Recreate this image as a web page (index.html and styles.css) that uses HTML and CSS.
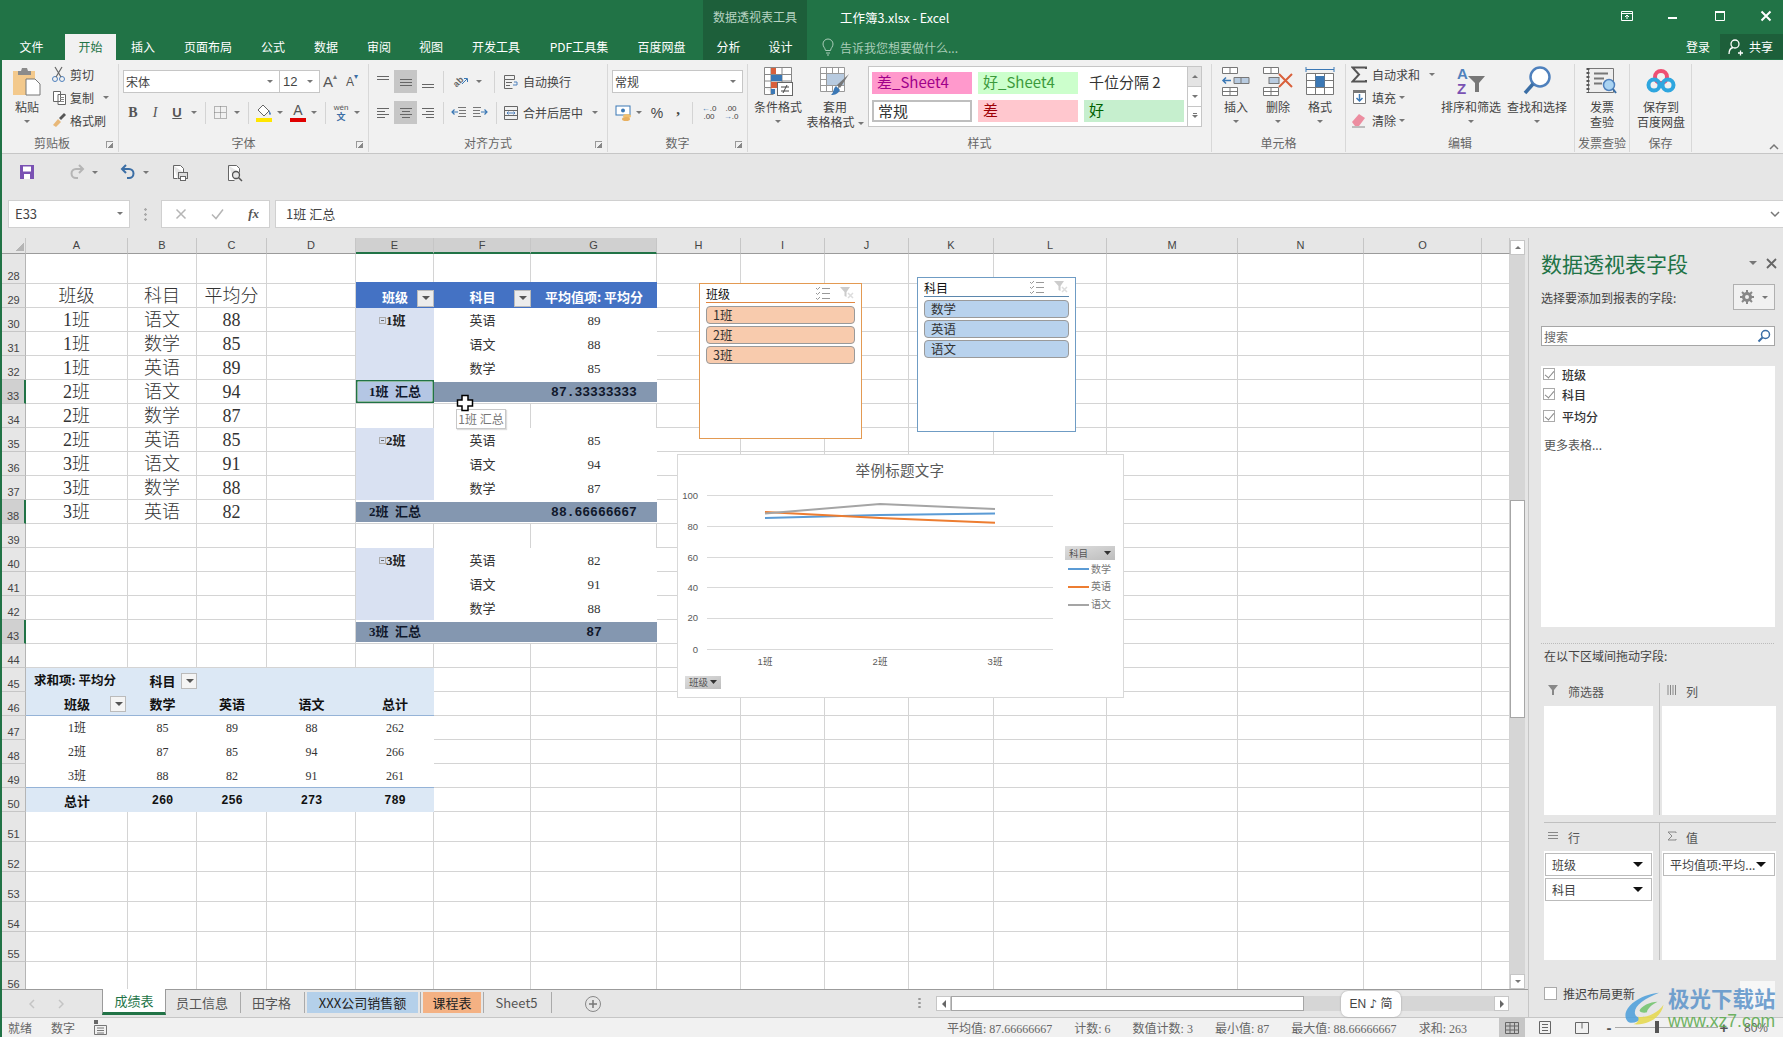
FILE: index.html
```html
<!DOCTYPE html>
<html lang="zh-CN">
<head>
  <meta charset="UTF-8" />
  <title>工作簿3.xlsx - Excel</title>
  <link rel="stylesheet" href="styles.css">
</head>
<body>
<div class="app">

  <!-- title bar -->
  <div class="titlebar">
    <div class="tool-title">数据透视表工具</div>
    <div class="doc-title">工作簿3.xlsx - Excel</div>
    <div class="win-btns">
      <svg width="14" height="14" viewBox="0 0 14 14"><path d="M1.5 2.5h11v9h-11zM1.5 4.5h11M7 10V6M5 8l2-2 2 2" fill="none" stroke="#fff"/></svg>
      <svg width="14" height="14" viewBox="0 0 14 14"><path d="M2 9h9" stroke="#fff" stroke-width="2"/></svg>
      <svg width="14" height="14" viewBox="0 0 14 14"><path d="M2.5 2.5h9v9h-9z" fill="none" stroke="#fff"/><path d="M2 3h10" stroke="#fff" stroke-width="2"/></svg>
      <svg width="14" height="14" viewBox="0 0 14 14"><path d="M2.5 2.5l9 9M11.5 2.5l-9 9" stroke="#fff" stroke-width="2"/></svg>
    </div>
  </div>

  <!-- ribbon tabs -->
  <div class="tabs">
    <div class="tab t-file">文件</div>
    <div class="tab t-home active">开始</div>
    <div class="tab t-ins">插入</div>
    <div class="tab t-page">页面布局</div>
    <div class="tab t-form">公式</div>
    <div class="tab t-data">数据</div>
    <div class="tab t-rev">审阅</div>
    <div class="tab t-view">视图</div>
    <div class="tab t-dev">开发工具</div>
    <div class="tab t-pdf">PDF工具集</div>
    <div class="tab t-pan">百度网盘</div>
    <div class="tab t-ana ctx">分析</div>
    <div class="tab t-des ctx">设计</div>
    <div class="tell">
      <svg width="12" height="18" viewBox="0 0 12 18"><path d="M3.5 12.5C3 9.5 1 9 1 6a5 5 0 0 1 10 0c0 3-2 3.500-2.500 6.500zM4 15h4M5 17h2" fill="none" stroke="#a9cdb8"/></svg>
      告诉我您想要做什么...
    </div>
    <div class="login">登录</div>
    <div class="share">
      <svg width="16" height="18" viewBox="0 0 16 18"><circle cx="7" cy="6" r="4" fill="none" stroke="#fff" stroke-width="1.300"/><path d="M1 16c0-4 2-6 4-6.500M10 15h5M12.500 12.500v5" fill="none" stroke="#fff" stroke-width="1.300"/></svg>
      共享
    </div>
  </div>

  <!-- ribbon -->
  <div class="ribbon">

    <div class="group g-clip">
      <div class="g-body row">
        <div class="big w48 paste">
          <svg class="big-ic" width="30" height="30" viewBox="0 0 30 30"><rect x="1" y="5" width="22" height="24" fill="#f3c98c"/><path d="M6 5h3l1-3h5l1 3h3v4H6z" fill="#8b8b8b"/><path d="M14 13h9l5 5v11H14z" fill="#fff" stroke="#777"/></svg>
          <span>粘贴</span><i class="caret"></i>
        </div>
        <div class="stack">
          <div class="sm"><span class="ic w18"><svg width="16" height="16" viewBox="0 0 16 16"><circle cx="4" cy="13" r="2.500" fill="none" stroke="#4f81bd"/><circle cx="11" cy="13" r="2.500" fill="none" stroke="#4f81bd"/><path d="M5 11L11 1M10 11L4 1" stroke="#666" stroke-width="1.200"/></svg></span><b>剪切</b></div>
          <div class="sm"><span class="ic w18"><svg width="15" height="15" viewBox="0 0 15 15"><path d="M1.500 1.500h7v10h-7zM6 4.500h7.500v10H6z" fill="#fff" stroke="#666"/><path d="M8 7.500h4M8 9.500h4M8 11.500h4" stroke="#888"/></svg></span><b>复制</b><span class="ic w24 sm-c"><i class="caret"></i></span></div>
          <div class="sm"><span class="ic w18"><svg width="16" height="16" viewBox="0 0 16 16"><path d="M2 13l5-6 3 3-5 5z" fill="#e8b878"/><path d="M8 6l5-5 2 2-5 5z" fill="#555"/></svg></span><b>格式刷</b></div>
        </div>
      </div>
      <div class="g-label lab-clip">剪贴板<i class="launch"></i></div>
    </div>

    <div class="group g-font">
      <div class="g-body">
        <div class="rrow">
          <div class="select s-font"><span>宋体</span><i class="caret"></i></div>
          <div class="select s-size"><span>12</span><i class="caret"></i></div>
          <span class="ic w20 letter">A<sup>▴</sup></span>
          <span class="ic w24 letter small">A<sup class="blue">▾</sup></span>
        </div>
        <div class="rrow">
          <span class="ic w22 fb">B</span>
          <span class="ic w22 fi">I</span>
          <span class="ic w22 fu">U</span>
          <span class="ic w12"><i class="caret"></i></span>
          <span class="ic w10"><i class="sep"></i></span>
          <span class="ic w21"><svg width="15" height="15" viewBox="0 0 15 15"><path d="M1.500 1.500h12v12h-12zM7.500 1.500v12M1.500 7.500h12" fill="none" stroke="#777" stroke-dasharray="1 1"/></svg></span>
          <span class="ic w12"><i class="caret"></i></span>
          <span class="ic w10"><i class="sep"></i></span>
          <span class="ic w22"><svg width="18" height="18" viewBox="0 0 18 18"><path d="M8 1l6 6-5 5-6-6z" fill="#fff" stroke="#666"/><path d="M14 6c1 2 2 3 2 4s-2 1-2 0z" fill="#4f81bd"/><rect x="1" y="14" width="16" height="4" fill="#ffe600"/></svg></span>
          <span class="ic w10"><i class="caret"></i></span>
          <span class="ic w26 fcolor">A</span>
          <span class="ic w6"><i class="caret"></i></span>
          <span class="ic w16"><i class="sep"></i></span>
          <span class="ic w16 wen"><small>wén</small><em>文</em></span>
          <span class="ic w16"><i class="caret"></i></span>
        </div>
      </div>
      <div class="g-label lab-font">字体<i class="launch"></i></div>
    </div>

    <div class="group g-align">
      <div class="g-body">
        <div class="rrow">
          <span class="ic w22"><svg width="16" height="16" viewBox="0 0 16 16"><path d="M2 2.500h12M2 5.500h12" stroke="#666"/></svg></span>
          <span class="ic w23 on"><svg width="16" height="16" viewBox="0 0 16 16"><path d="M2 5.500h12M2 8.500h12M2 11.500h12" stroke="#666"/></svg></span>
          <span class="ic w22"><svg width="16" height="16" viewBox="0 0 16 16"><path d="M2 10.500h12M2 13.500h12" stroke="#666"/></svg></span>
          <span class="ic w8"><i class="sep"></i></span>
          <span class="ic w26"><svg width="18" height="18" viewBox="0 0 18 18"><text x="2" y="12" transform="rotate(-45 7 9)" class="orient">ab</text><path d="M11 11l5-5M13 5.500h3.500V9" fill="none" stroke="#3b78b5"/></svg></span>
          <span class="ic w12"><i class="caret"></i></span>
          <span class="ic w18"><i class="sep"></i></span>
          <span class="ic w16"><svg width="16" height="16" viewBox="0 0 16 16"><path d="M1.500 1.500h10v4h-10zM1.500 5.500v9h8M3 8.500h6M3 11.500h4" fill="none" stroke="#666"/><path d="M11 8h3v3h-4" fill="none" stroke="#4f81bd"/></svg></span>
          <b class="t">自动换行</b>
        </div>
        <div class="rrow">
          <span class="ic w22"><svg width="16" height="16" viewBox="0 0 16 16"><path d="M2 3.500h12M2 6.500h8M2 9.500h12M2 12.500h8" stroke="#666"/></svg></span>
          <span class="ic w23 on"><svg width="16" height="16" viewBox="0 0 16 16"><path d="M2 3.500h12M4 6.500h8M2 9.500h12M4 12.500h8" stroke="#666"/></svg></span>
          <span class="ic w22"><svg width="16" height="16" viewBox="0 0 16 16"><path d="M2 3.500h12M6 6.500h8M2 9.500h12M6 12.500h8" stroke="#666"/></svg></span>
          <span class="ic w8"><i class="sep"></i></span>
          <span class="ic w24"><svg width="16" height="14" viewBox="0 0 16 14"><path d="M7 1.500h8M8 4.500h7M8 7.500h7M7 10.500h8" stroke="#777"/><path d="M1 6h6M3.500 3.500L1 6l2.500 2.500" fill="none" stroke="#3b78b5" stroke-width="1.200"/></svg></span>
          <span class="ic w18"><svg width="16" height="14" viewBox="0 0 16 14"><path d="M1 1.500h8M1 4.500h7M1 7.500h7M1 10.500h8" stroke="#777"/><path d="M9 6h6M12.500 3.500L15 6l-2.500 2.500" fill="none" stroke="#3b78b5" stroke-width="1.200"/></svg></span>
          <span class="ic w14"><i class="sep"></i></span>
          <span class="ic w16"><svg width="16" height="16" viewBox="0 0 16 16"><path d="M1.500 1.500h13v13h-13zM1.500 5.500h13M1.500 10.500h13" fill="none" stroke="#666"/><path d="M4 8h8M5.500 6.500L4 8l1.500 1.500M10.500 6.500L12 8l-1.500 1.500" fill="none" stroke="#4f81bd"/></svg></span>
          <b class="t">合并后居中</b>
          <span class="ic w24"><i class="caret"></i></span>
        </div>
      </div>
      <div class="g-label lab-align">对齐方式<i class="launch"></i></div>
    </div>

    <div class="group g-num">
      <div class="g-body">
        <div class="rrow">
          <div class="select s-num"><span>常规</span><i class="caret"></i></div>
        </div>
        <div class="rrow">
          <span class="ic w24"><svg width="18" height="18" viewBox="0 0 18 18"><rect x="1" y="2" width="14" height="9" fill="#fff" stroke="#3b78b5"/><circle cx="8" cy="6.500" r="2" fill="#3b78b5"/><ellipse cx="12" cy="12" rx="4" ry="2" fill="#f0c070"/><ellipse cx="11" cy="15" rx="4" ry="2" fill="#e8b060"/></svg></span>
          <span class="ic w6"><i class="caret"></i></span>
          <span class="ic w30 pct">%</span>
          <span class="ic w12 comma">,</span>
          <span class="ic w17"><i class="sep"></i></span>
          <span class="ic w16 dec"><small><u>←</u>.0</small><small>.00</small></span>
          <span class="ic w28 dec"><small>.00</small><small><u>→</u>.0</small></span>
        </div>
      </div>
      <div class="g-label lab-num">数字<i class="launch"></i></div>
    </div>

    <div class="group g-style">
      <div class="g-body row">
        <div class="big w60">
          <svg class="big-ic" width="30" height="30" viewBox="0 0 30 30"><path d="M1.500 1.500h27v20h-27zM1.500 8.500h27M1.500 15h27M1.500 21.500v7h9M8 1.500v27M19 1.500v20" fill="#fff" stroke="#888"/><rect x="8" y="2" width="5" height="6" fill="#d9603b"/><rect x="8" y="9" width="11" height="6" fill="#3b78b5"/><rect x="8" y="16" width="7" height="6" fill="#d9603b"/><rect x="8" y="23" width="4" height="5" fill="#3b78b5"/><rect x="14.500" y="16.500" width="15" height="13" fill="#fff" stroke="#666"/><path d="M18 21h8M18 25h8M24 19l-4 8" stroke="#444"/></svg>
          <span>条件格式</span><i class="caret"></i>
        </div>
        <div class="big w54">
          <svg class="big-ic" width="32" height="30" viewBox="0 0 32 30"><path d="M1.500 1.500h24v24h-24zM1.500 7.500h24M1.500 13.500h24M1.500 19.500h24M7.500 1.500v24M13.500 1.500v24M19.500 1.500v24" fill="#fff" stroke="#999"/><rect x="8" y="8" width="17" height="11" fill="#b8cbe0"/><path d="M30 8L18 19l3 3z" fill="#777"/><path d="M17 20l4 4c-2 4-5 5-9 5 3-2 2-7 5-9z" fill="#3b78b5"/></svg>
          <span>套用</span><span>表格格式<i class="caret inline"></i></span>
        </div>
        <div class="gallery">
          <div class="cells">
            <div class="st st-bad4">差_Sheet4</div>
            <div class="st st-good4">好_Sheet4</div>
            <div class="st">千位分隔 2</div>
            <div class="st st-normal">常规</div>
            <div class="st st-bad">差</div>
            <div class="st st-good">好</div>
          </div>
          <div class="g-scroll">
            <span class="dis"><i class="caret up"></i></span>
            <span><i class="caret"></i></span>
            <span><i class="caret bar"></i></span>
          </div>
        </div>
      </div>
      <div class="g-label lab-style">样式</div>
    </div>

    <div class="group g-cells">
      <div class="g-body row">
        <div class="big w48">
          <svg class="big-ic" width="30" height="30" viewBox="0 0 30 30"><path d="M1.500 1.500h15v6h-15zM9 1.500v6M1.500 21.500h15v8h-15zM1.500 25.500h15M9 21.500v8" fill="#fff" stroke="#777"/><path d="M13 11.500h15v6H13zM20 11.500v6" fill="#b8cbe0" stroke="#777"/><path d="M2 14.500h8M5 11.500l-3 3 3 3" fill="none" stroke="#3b78b5" stroke-width="1.500"/></svg>
          <span>插入</span><i class="caret"></i>
        </div>
        <div class="big w36">
          <svg class="big-ic" width="32" height="30" viewBox="0 0 32 30"><path d="M1.500 1.500h15v6h-15zM9 1.500v6M1.500 21.500h15v8h-15zM1.500 25.500h15M9 21.500v8" fill="#fff" stroke="#777"/><rect x="7" y="11.500" width="10" height="6" fill="#b8cbe0" stroke="#777"/><path d="M17 8l13 13M30 8L17 21" stroke="#d9603b" stroke-width="2"/></svg>
          <span>删除</span><i class="caret"></i>
        </div>
        <div class="big w48">
          <svg class="big-ic" width="30" height="30" viewBox="0 0 30 30"><path d="M1 3.500h28M1 1v5M29 1v5" stroke="#3b78b5" fill="none"/><path d="M1.500 7.500h27v21h-27zM1.500 14.500h27M1.500 21.500h27M10.500 7.500v21M19.500 7.500v21" fill="#fff" stroke="#777"/><rect x="10.500" y="10" width="9" height="11" fill="#3b78b5"/></svg>
          <span>格式</span><i class="caret"></i>
        </div>
      </div>
      <div class="g-label lab-cells">单元格</div>
    </div>

    <div class="group g-edit">
      <div class="g-body row">
        <div class="stack w95">
          <div class="sm"><span class="ic w26"><svg width="16" height="17" viewBox="0 0 16 17"><path d="M15 3V1.500H1.500L8 8.500l-6.500 7H15V14" fill="none" stroke="#555" stroke-width="2"/></svg></span><b>自动求和</b><span class="ic w24 sm-c"><i class="caret"></i></span></div>
          <div class="sm"><span class="ic w26"><svg width="15" height="16" viewBox="0 0 15 16"><path d="M1.500 1.500h12v13h-12z" fill="#fff" stroke="#777"/><rect x="1" y="1" width="13" height="3" fill="#777"/><path d="M7.500 5v7M4.500 9l3 3 3-3" fill="none" stroke="#3b78b5" stroke-width="1.500"/></svg></span><b>填充</b><span class="ic w12 sm-c"><i class="caret"></i></span></div>
          <div class="sm"><span class="ic w26"><svg width="16" height="16" viewBox="0 0 16 16"><path d="M1 10l7-8 6 4-6 8H4z" fill="#ec8da0"/><path d="M1 15h13" stroke="#888"/></svg></span><b>清除</b><span class="ic w12 sm-c"><i class="caret"></i></span></div>
        </div>
        <div class="big w60">
          <svg class="big-ic" width="32" height="30" viewBox="0 0 32 30"><text x="2" y="13" class="sort-a">A</text><text x="2" y="28" class="sort-z">Z</text><path d="M13 10h17l-6 7v9h-4v-9z" fill="#777"/></svg>
          <span>排序和筛选</span><i class="caret"></i>
        </div>
        <div class="big w60 ml6">
          <svg class="big-ic" width="30" height="30" viewBox="0 0 30 30"><circle cx="18" cy="11" r="9.500" fill="#fff" stroke="#4f81bd" stroke-width="2.500"/><path d="M11 18L3 27" stroke="#3b6ea5" stroke-width="3.500"/></svg>
          <span>查找和选择</span><i class="caret"></i>
        </div>
      </div>
      <div class="g-label lab-edit">编辑</div>
    </div>

    <div class="group g-inv">
      <div class="g-body row">
        <div class="big w54">
          <svg class="big-ic" width="32" height="30" viewBox="0 0 32 30"><path d="M2.500 2.500h25v24h-25z" fill="#eee" stroke="#777"/><path d="M2 2v25" stroke="#555" stroke-width="3" stroke-dasharray="2 2"/><path d="M8 7.500h14M8 12.500h10M8 17.500h8" stroke="#777" stroke-width="2"/><circle cx="23" cy="19" r="5.500" fill="#a9d3f2" stroke="#4f81bd" stroke-width="1.500"/><path d="M27 23l3 4" stroke="#3b6ea5" stroke-width="2"/></svg>
          <span>发票</span><span>查验</span>
        </div>
      </div>
      <div class="g-label">发票查验</div>
    </div>

    <div class="group g-save">
      <div class="g-body row">
        <div class="big w62">
          <svg class="big-ic" width="30" height="30" viewBox="0 0 30 30"><circle cx="15" cy="11" r="6" fill="none" stroke="#ef4f72" stroke-width="4"/><circle cx="8" cy="19" r="5.500" fill="none" stroke="#2ea6df" stroke-width="4"/><circle cx="22" cy="19" r="5.500" fill="none" stroke="#2ea6df" stroke-width="4"/></svg>
          <span>保存到</span><span>百度网盘</span>
        </div>
      </div>
      <div class="g-label">保存</div>
    </div>

    <svg class="collapse" width="12" height="8" viewBox="0 0 12 8"><path d="M2 6l4-4 4 4" fill="none" stroke="#777" stroke-width="1.500"/></svg>
  </div>

  <!-- quick access -->
  <div class="qat">
    <svg class="q-save" width="16" height="16" viewBox="0 0 16 16"><path d="M1 1h14v14H1z" fill="#7a52b3"/><rect x="4" y="2.500" width="8" height="5" fill="#fff"/><rect x="5" y="10" width="6" height="5" fill="#fff"/></svg>
    <svg class="q-redo" width="16" height="16" viewBox="0 0 16 16"><path d="M14 5H7a4.500 4.500 0 0 0 0 9h2M10 1l4 4-4 4" fill="none" stroke="#b5b5b5" stroke-width="2"/></svg>
    <i class="caret q-c"></i>
    <svg class="q-undo" width="16" height="16" viewBox="0 0 16 16"><path d="M2 5h7a4.500 4.500 0 0 1 0 9H7M6 1L2 5l4 4" fill="none" stroke="#3b6ea5" stroke-width="2"/></svg>
    <i class="caret q-c"></i>
    <svg class="q-print" width="17" height="18" viewBox="0 0 17 18"><path d="M1.500 1.500h7l3 3v4M1.500 1.500v13h4" fill="#fff" stroke="#666"/><rect x="6.500" y="8.500" width="9" height="6" fill="#ddd" stroke="#666"/><rect x="8.500" y="12.500" width="5" height="4" fill="#fff" stroke="#666"/></svg>
    <svg class="q-find" width="17" height="18" viewBox="0 0 17 18"><path d="M1.500 1.500h8l3 3v4M1.500 1.500v15h6" fill="#fff" stroke="#666"/><circle cx="9" cy="11" r="3.500" fill="none" stroke="#555" stroke-width="1.300"/><path d="M11.500 13.500l3.500 3.500" stroke="#555" stroke-width="1.500"/></svg>
  </div>

  <!-- formula bar -->
  <div class="formula">
    <div class="namebox"><span>E33</span><i class="caret"></i></div>
    <div class="dots"></div>
    <div class="fx">
      <svg width="12" height="12" viewBox="0 0 12 12"><path d="M1.500 1.500l9 9M10.500 1.500l-9 9" stroke="#b5b5b5" stroke-width="1.500"/></svg>
      <svg width="13" height="12" viewBox="0 0 13 12"><path d="M1 6.500L5 10.500 12 1.500" fill="none" stroke="#b5b5b5" stroke-width="1.500"/></svg>
      <em>fx</em>
    </div>
    <div class="finput"><span>1班 汇总</span><svg width="10" height="8" viewBox="0 0 10 8"><path d="M1 2l4 4 4-4" fill="none" stroke="#777" stroke-width="1.500"/></svg></div>
  </div>

  <!-- worksheet + side panel -->
  <div class="main">
    <div class="sheet">
      <div class="sheet-top">
        <div class="gridwrap">
          <table class="grid">
            <colgroup><col class="c0"><col class="ca"><col class="cb"><col class="cc"><col class="cd"><col class="ce"><col class="cf"><col class="cg"><col class="ch"><col class="ci"><col class="cj"><col class="ck"><col class="cl"><col class="cm"><col class="cn"><col class="co"><col class="cp"></colgroup>
            <tr class="head"><th class="corner"></th><th>A</th><th>B</th><th>C</th><th>D</th><th class="sel">E</th><th class="sel">F</th><th class="sel">G</th><th>H</th><th>I</th><th>J</th><th>K</th><th>L</th><th>M</th><th>N</th><th>O</th><th></th></tr>
            <tr class="h30"><th>28</th><td></td><td></td><td></td><td></td><td></td><td></td><td></td><td></td><td></td><td></td><td></td><td></td><td></td><td></td><td></td><td></td></tr>
            <tr><th>29</th><td class="bigt">班级</td><td class="bigt">科目</td><td class="bigt">平均分</td><td></td><td class="ph">班级<i class="fbtn"></i></td><td class="ph">科目<i class="fbtn"></i></td><td class="ph">平均值项: 平均分</td><td></td><td></td><td></td><td></td><td></td><td></td><td></td><td></td><td></td></tr>
            <tr><th>30</th><td class="bigt">1班</td><td class="bigt">语文</td><td class="bigt">88</td><td></td><td class="lbl nb"><i class="pm"></i>1班</td><td class="pv">英语</td><td class="pv">89</td><td></td><td></td><td></td><td></td><td></td><td></td><td></td><td></td><td></td></tr>
            <tr><th>31</th><td class="bigt">1班</td><td class="bigt">数学</td><td class="bigt">85</td><td></td><td class="lbl nb"></td><td class="pv">语文</td><td class="pv">88</td><td></td><td></td><td></td><td></td><td></td><td></td><td></td><td></td><td></td></tr>
            <tr><th>32</th><td class="bigt">1班</td><td class="bigt">英语</td><td class="bigt">89</td><td></td><td class="lbl"></td><td class="pv">数学</td><td class="pv">85</td><td></td><td></td><td></td><td></td><td></td><td></td><td></td><td></td><td></td></tr>
            <tr><th class="rsel">33</th><td class="bigt">2班</td><td class="bigt">语文</td><td class="bigt">94</td><td></td><td class="sum cur">1班 &nbsp;汇总</td><td class="sum"></td><td class="sum mono">87.33333333</td><td></td><td></td><td></td><td></td><td></td><td></td><td></td><td></td><td></td></tr>
            <tr><th>34</th><td class="bigt">2班</td><td class="bigt">数学</td><td class="bigt">87</td><td></td><td class="nb"></td><td class="nb"></td><td class="nb"></td><td></td><td></td><td></td><td></td><td></td><td></td><td></td><td></td><td></td></tr>
            <tr><th>35</th><td class="bigt">2班</td><td class="bigt">英语</td><td class="bigt">85</td><td></td><td class="lbl nb"><i class="pm"></i>2班</td><td class="pv">英语</td><td class="pv">85</td><td></td><td></td><td></td><td></td><td></td><td></td><td></td><td></td><td></td></tr>
            <tr><th>36</th><td class="bigt">3班</td><td class="bigt">语文</td><td class="bigt">91</td><td></td><td class="lbl nb"></td><td class="pv">语文</td><td class="pv">94</td><td></td><td></td><td></td><td></td><td></td><td></td><td></td><td></td><td></td></tr>
            <tr><th>37</th><td class="bigt">3班</td><td class="bigt">数学</td><td class="bigt">88</td><td></td><td class="lbl"></td><td class="pv">数学</td><td class="pv">87</td><td></td><td></td><td></td><td></td><td></td><td></td><td></td><td></td><td></td></tr>
            <tr><th class="rsel">38</th><td class="bigt">3班</td><td class="bigt">英语</td><td class="bigt">82</td><td></td><td class="sum">2班 &nbsp;汇总</td><td class="sum"></td><td class="sum mono">88.66666667</td><td></td><td></td><td></td><td></td><td></td><td></td><td></td><td></td><td></td></tr>
            <tr><th>39</th><td></td><td></td><td></td><td></td><td class="nb"></td><td class="nb"></td><td class="nb"></td><td></td><td></td><td></td><td></td><td></td><td></td><td></td><td></td><td></td></tr>
            <tr><th>40</th><td></td><td></td><td></td><td></td><td class="lbl nb"><i class="pm"></i>3班</td><td class="pv">英语</td><td class="pv">82</td><td></td><td></td><td></td><td></td><td></td><td></td><td></td><td></td><td></td></tr>
            <tr><th>41</th><td></td><td></td><td></td><td></td><td class="lbl nb"></td><td class="pv">语文</td><td class="pv">91</td><td></td><td></td><td></td><td></td><td></td><td></td><td></td><td></td><td></td></tr>
            <tr><th>42</th><td></td><td></td><td></td><td></td><td class="lbl"></td><td class="pv">数学</td><td class="pv">88</td><td></td><td></td><td></td><td></td><td></td><td></td><td></td><td></td><td></td></tr>
            <tr><th class="rsel">43</th><td></td><td></td><td></td><td></td><td class="sum">3班 &nbsp;汇总</td><td class="sum"></td><td class="sum mono">87</td><td></td><td></td><td></td><td></td><td></td><td></td><td></td><td></td><td></td></tr>
            <tr><th>44</th><td></td><td></td><td></td><td></td><td></td><td></td><td></td><td></td><td></td><td></td><td></td><td></td><td></td><td></td><td></td><td></td></tr>
            <tr><th>45</th><td class="pb2 left">求和项: 平均分</td><td class="pb2">科目<i class="fbtn lt"></i></td><td class="pb2"></td><td class="pb2"></td><td class="pb2"></td><td></td><td></td><td></td><td></td><td></td><td></td><td></td><td></td><td></td><td></td><td></td></tr>
            <tr><th>46</th><td class="pb2 line">班级<i class="fbtn lt"></i></td><td class="pb2 line">数学</td><td class="pb2 line">英语</td><td class="pb2 line">语文</td><td class="pb2 line">总计</td><td></td><td></td><td></td><td></td><td></td><td></td><td></td><td></td><td></td><td></td><td></td></tr>
            <tr><th>47</th><td class="pv12">1班</td><td class="pv12">85</td><td class="pv12">89</td><td class="pv12">88</td><td class="pv12">262</td><td></td><td></td><td></td><td></td><td></td><td></td><td></td><td></td><td></td><td></td><td></td></tr>
            <tr><th>48</th><td class="pv12">2班</td><td class="pv12">87</td><td class="pv12">85</td><td class="pv12">94</td><td class="pv12">266</td><td></td><td></td><td></td><td></td><td></td><td></td><td></td><td></td><td></td><td></td><td></td></tr>
            <tr><th>49</th><td class="pv12 line">3班</td><td class="pv12 line">88</td><td class="pv12 line">82</td><td class="pv12 line">91</td><td class="pv12 line">261</td><td></td><td></td><td></td><td></td><td></td><td></td><td></td><td></td><td></td><td></td><td></td></tr>
            <tr><th>50</th><td class="pb2">总计</td><td class="pb2 mono12">260</td><td class="pb2 mono12">256</td><td class="pb2 mono12">273</td><td class="pb2 mono12">789</td><td></td><td></td><td></td><td></td><td></td><td></td><td></td><td></td><td></td><td></td><td></td></tr>
            <tr class="h30"><th>51</th><td></td><td></td><td></td><td></td><td></td><td></td><td></td><td></td><td></td><td></td><td></td><td></td><td></td><td></td><td></td><td></td></tr>
            <tr class="h30"><th>52</th><td></td><td></td><td></td><td></td><td></td><td></td><td></td><td></td><td></td><td></td><td></td><td></td><td></td><td></td><td></td><td></td></tr>
            <tr class="h30"><th>53</th><td></td><td></td><td></td><td></td><td></td><td></td><td></td><td></td><td></td><td></td><td></td><td></td><td></td><td></td><td></td><td></td></tr>
            <tr class="h30"><th>54</th><td></td><td></td><td></td><td></td><td></td><td></td><td></td><td></td><td></td><td></td><td></td><td></td><td></td><td></td><td></td><td></td></tr>
            <tr class="h30"><th>55</th><td></td><td></td><td></td><td></td><td></td><td></td><td></td><td></td><td></td><td></td><td></td><td></td><td></td><td></td><td></td><td></td></tr>
            <tr class="h30"><th>56</th><td></td><td></td><td></td><td></td><td></td><td></td><td></td><td></td><td></td><td></td><td></td><td></td><td></td><td></td><td></td><td></td></tr>
          </table>

          <!-- things floating over the cells -->
          <div class="slicer sl-class">
            <div class="sl-head"><span>班级</span><svg width="16" height="14" viewBox="0 0 16 14"><path d="M1 2l1.500 1.500L5 1M1 7l1.500 1.500L5 6M1 12l1.500 1.500L5 11M7 2.500h8M7 7.500h8M7 12.500h8" fill="none" stroke="#999"/></svg><svg width="16" height="14" viewBox="0 0 16 14"><path d="M1 1h10L7.500 6v5l-2-1V6z" fill="#ccc"/><path d="M9 7l5 5M14 7l-5 5" stroke="#ddd" stroke-width="1.500"/></svg></div>
            <div class="sl-item">1班</div>
            <div class="sl-item">2班</div>
            <div class="sl-item">3班</div>
          </div>
          <div class="slicer sl-subj">
            <div class="sl-head"><span>科目</span><svg width="16" height="14" viewBox="0 0 16 14"><path d="M1 2l1.500 1.500L5 1M1 7l1.500 1.500L5 6M1 12l1.500 1.500L5 11M7 2.500h8M7 7.500h8M7 12.500h8" fill="none" stroke="#999"/></svg><svg width="16" height="14" viewBox="0 0 16 14"><path d="M1 1h10L7.500 6v5l-2-1V6z" fill="#ccc"/><path d="M9 7l5 5M14 7l-5 5" stroke="#ddd" stroke-width="1.500"/></svg></div>
            <div class="sl-item">数学</div>
            <div class="sl-item">英语</div>
            <div class="sl-item">语文</div>
          </div>

          <div class="chart">
            <svg width="447" height="244" viewBox="677 454 447 244">
              <text x="900" y="476" class="ch-title" text-anchor="middle">举例标题文字</text>
              <path d="M707 495.500h346M707 526.500h346M707 557.500h346M707 587.500h346M707 618.500h346M707 649.500h346" stroke="#d9d9d9"/>
              <g class="ch-y" text-anchor="end">
                <text x="698" y="499">100</text><text x="698" y="530">80</text><text x="698" y="561">60</text><text x="698" y="591">40</text><text x="698" y="621">20</text><text x="698" y="653">0</text>
              </g>
              <g class="ch-x" text-anchor="middle">
                <text x="765" y="665">1班</text><text x="880" y="665">2班</text><text x="995" y="665">3班</text>
              </g>
              <polyline points="765,518 880,515 995,513.500" fill="none" stroke="#5b9bd5" stroke-width="2"/>
              <polyline points="765,512 880,518 995,522.700" fill="none" stroke="#ed7d31" stroke-width="2"/>
              <polyline points="765,513.500 880,504 995,509" fill="none" stroke="#a5a5a5" stroke-width="2"/>
              <rect x="1065" y="546" width="50" height="14" fill="url(#btnGrad)"/>
              <text x="1069" y="557" class="ch-btn">科目</text>
              <path d="M1104 551h7l-3.500 4z" fill="#333"/>
              <path d="M1068 569h21" stroke="#5b9bd5" stroke-width="2"/>
              <path d="M1068 587h21" stroke="#ed7d31" stroke-width="2"/>
              <path d="M1068 605h21" stroke="#a5a5a5" stroke-width="2"/>
              <g class="ch-leg"><text x="1091" y="573">数学</text><text x="1091" y="590">英语</text><text x="1091" y="608">语文</text></g>
              <rect x="685" y="676" width="36" height="13" fill="url(#btnGrad)"/>
              <text x="689" y="686" class="ch-btn">班级</text>
              <path d="M710 680h7l-3.500 4z" fill="#333"/>
              <defs><linearGradient id="btnGrad" x1="0" x2="1" y1="0" y2="1"><stop offset="0" stop-color="#dedede"/><stop offset="1" stop-color="#bdbdbd"/></linearGradient></defs>
            </svg>
          </div>

          <div class="tip">1班 汇总</div>
          <svg class="cursor" width="18" height="18" viewBox="0 0 18 18"><path d="M6 1.500h6v4.500h4.500v6H12v4.500H6V12H1.500V6H6z" fill="#fff" stroke="#000" stroke-width="1.500"/></svg>
        </div>

        <div class="vscroll">
          <div class="sb-btn"><i class="caret up"></i></div>
          <div class="sb-track"><div class="sb-thumb"></div></div>
          <div class="sb-btn"><i class="caret"></i></div>
        </div>
      </div>

      <div class="tabbar">
        <div class="nav">
          <svg width="6" height="10" viewBox="0 0 6 10"><path d="M5 1L1 5l4 4" fill="none" stroke="#c4c4c4" stroke-width="1.500"/></svg>
          <svg width="6" height="10" viewBox="0 0 6 10"><path d="M1 1l4 4-4 4" fill="none" stroke="#c4c4c4" stroke-width="1.500"/></svg>
        </div>
        <div class="stab s-active">成绩表</div>
        <div class="stab s2">员工信息</div>
        <div class="stab s3">田字格</div>
        <div class="stab s4"><span class="blue-tab">XXX公司销售额</span></div>
        <div class="stab s5"><span class="org-tab">课程表</span></div>
        <div class="stab s6">Sheet5</div>
        <svg class="addtab" width="18" height="18" viewBox="0 0 18 18"><circle cx="9" cy="9" r="7.500" fill="none" stroke="#888"/><path d="M9 5v8M5 9h8" stroke="#777" stroke-width="1.500"/></svg>
        <div class="tdots"></div>
        <div class="hscroll">
          <div class="hb"><i class="caret lft"></i></div>
          <div class="hthumb"></div>
          <div class="htrack"></div>
          <div class="hb"><i class="caret rgt"></i></div>
        </div>
      </div>
    </div>

    <div class="panel">
      <div class="p-title"><span>数据透视表字段</span><i class="caret p-caret"></i><svg width="11" height="11" viewBox="0 0 11 11"><path d="M1 1l9 9M10 1l-9 9" stroke="#666" stroke-width="1.800"/></svg></div>
      <div class="p-sub"><span>选择要添加到报表的字段:</span>
        <div class="gear"><svg width="14" height="14" viewBox="0 0 14 14"><circle cx="7" cy="7" r="3.500" fill="none" stroke="#888" stroke-width="3"/><path d="M7 0v3M7 11v3M0 7h3M11 7h3M2 2l2 2M10 10l2 2M2 12l2-2M10 4l2-2" stroke="#888" stroke-width="2"/></svg><i class="caret"></i></div>
      </div>
      <div class="p-search"><span>搜索</span><svg width="14" height="14" viewBox="0 0 14 14"><circle cx="8.500" cy="5.500" r="4" fill="none" stroke="#3b6ea5" stroke-width="1.500"/><path d="M5.500 8.500L1.500 12.500" stroke="#3b6ea5" stroke-width="2"/></svg></div>
      <div class="p-list">
        <div class="fld f1"><i class="chk"></i>班级</div>
        <div class="fld f2"><i class="chk"></i>科目</div>
        <div class="fld f3"><i class="chk"></i>平均分</div>
        <div class="more">更多表格...</div>
      </div>
      <div class="p-dots"></div>
      <div class="p-drag">在以下区域间拖动字段:</div>
      <div class="areas">
        <div class="area a-left">
          <div class="a-head"><svg width="10" height="10" viewBox="0 0 10 10"><path d="M0 0h10L6 5v5H4V5z" fill="#888"/></svg>筛选器</div>
          <div class="a-box"></div>
        </div>
        <div class="area a-right">
          <div class="a-head"><svg width="10" height="10" viewBox="0 0 10 10"><path d="M1 0v10M3.500 0v10M6 0v10M8.500 0v10" stroke="#888"/></svg>列</div>
          <div class="a-box"></div>
        </div>
        <div class="area a-left a-low">
          <div class="a-head"><svg width="10" height="10" viewBox="0 0 10 10"><path d="M0 1.500h10M0 4.500h10M0 7.500h10" stroke="#888"/></svg>行</div>
          <div class="a-box">
            <div class="pill"><span>班级</span><i class="caret dark"></i></div>
            <div class="pill"><span>科目</span><i class="caret dark"></i></div>
          </div>
        </div>
        <div class="area a-right a-low">
          <div class="a-head"><svg width="10" height="10" viewBox="0 0 10 10"><path d="M9 2V1H1l4 4-4 4h8V8" fill="none" stroke="#888"/></svg>值</div>
          <div class="a-box">
            <div class="pill"><span>平均值项:平均...</span><i class="caret dark"></i></div>
          </div>
        </div>
      </div>
      <div class="p-foot">
        <i class="chk empty"></i><span>推迟布局更新</span>
        <div class="p-update"></div>
      </div>
    </div>
  </div>

  <!-- status bar -->
  <div class="status">
    <span class="st-ready">就绪</span>
    <span class="st-mode">数字</span>
    <svg class="st-cal" width="13" height="15" viewBox="0 0 13 15"><rect x="0" y="0" width="4" height="4" fill="#666"/><path d="M.5 5.500h12v9H.5zM3 8h7M3 10.500h7M3 13h7" fill="none" stroke="#777"/></svg>
    <div class="st-stats">
      <span>平均值: 87.66666667</span>
      <span>计数: 6</span>
      <span>数值计数: 3</span>
      <span>最小值: 87</span>
      <span>最大值: 88.66666667</span>
      <span>求和: 263</span>
    </div>
    <div class="viewbtn vb1 on"><svg width="14" height="12" viewBox="0 0 14 12"><path d="M.5.500h13v11H.5zM.5 4h13M.5 8h13M5 .500v11M9.500 .500v11" fill="none" stroke="#666"/></svg></div>
    <div class="viewbtn vb2"><svg width="12" height="13" viewBox="0 0 12 13"><path d="M.5.500h11v12H.5zM3 3.500h6M3 6.500h6M3 9.500h6" fill="none" stroke="#666"/></svg></div>
    <div class="viewbtn vb3"><svg width="14" height="12" viewBox="0 0 14 12"><path d="M.5 .500h13v11H.5zM7 .500v6" fill="none" stroke="#666"/></svg></div>
    <div class="zoomer">
      <b>-</b>
      <div class="z-line"><i></i></div>
      <b>+</b>
    </div>
    <span class="z-val">80%</span>
  </div>

  <!-- overlays -->
  <div class="ime">EN <span>♪</span> 简</div>
  <div class="wmark">
    <svg width="48" height="50" viewBox="0 0 64 50"><path d="M10 40C0 28 18 6 52 2 32 10 18 20 20 30c1 5 6 6 12 4-8 8-18 10-22 6z" fill="#4a9edb"/><path d="M24 34c10 2 26-4 34-16-2 14-18 28-40 26 6-2 8-6 6-10z" fill="#e6d94a"/><path d="M26 26c2-6 14-12 24-12-8 4-14 10-14 14-3 1-8 1-10-2z" fill="#6fc36a"/></svg>
    <div><div class="wm-cn">极光下载站</div><div class="wm-url">www.xz7.com</div></div>
  </div>
</div>
</body>
</html>
```

FILE: styles.css
```css
* {
  box-sizing: border-box;
}
html, body {
  margin: 0;
  padding: 0;
  height: 100%;
  overflow: hidden;
}
body {
  font-family: "Noto Sans CJK SC", "Liberation Sans", sans-serif;
  font-size: 12px;
  color: #444;
  background: #e6e6e6;
}
.app {
  position: relative;
  width: 1783px;
  height: 1037px;
  border-left: 2px solid #217346;
  display: flex;
  flex-direction: column;
  overflow: hidden;
}
svg {
  display: block;
  flex: none;
}
i, em {
  font-style: normal;
}

/* small triangle used everywhere */
.caret {
  display: inline-block;
  flex: none;
  width: 0;
  height: 0;
  border-left: 3px solid transparent;
  border-right: 3px solid transparent;
  border-top: 3px solid #777;
}
.caret.up {
  border-top: 0;
  border-bottom: 3px solid #777;
}
.caret.dark {
  border-left-width: 5px;
  border-right-width: 5px;
  border-top: 5px solid #111;
}
.caret.lft {
  border: 0;
  border-top: 4px solid transparent;
  border-bottom: 4px solid transparent;
  border-right: 4px solid #666;
}
.caret.rgt {
  border: 0;
  border-top: 4px solid transparent;
  border-bottom: 4px solid transparent;
  border-left: 4px solid #666;
}

/* title bar */
.titlebar {
  height: 34px;
  background: #217346;
  display: flex;
  align-items: stretch;
  color: #fff;
}
.tool-title {
  width: 104px;
  margin-left: 701px;
  background: #1d5f3a;
  color: #b7d3c2;
  text-align: center;
  line-height: 34px;
}
.doc-title {
  margin-left: 33px;
  font-size: 12.5px;
  line-height: 36px;
}
.win-btns {
  margin-left: auto;
  width: 183px;
  display: flex;
  justify-content: space-between;
  align-items: center;
  padding: 0 10px 2px 20px;
}

/* ribbon tabs */
.tabs {
  height: 26px;
  background: #217346;
  display: flex;
  align-items: stretch;
  color: #fff;
}
.tab {
  text-align: center;
  line-height: 25px;
}
.tab.active {
  background: #f1f1f1;
  color: #217346;
}
.tab.ctx {
  background: #1d5f3a;
}
.t-file { width: 63px; padding-right: 4px; }
.t-home { width: 51px; }
.t-ins { width: 54px; }
.t-page { width: 76px; }
.t-form { width: 54px; }
.t-data { width: 52px; }
.t-rev { width: 54px; }
.t-view { width: 50px; }
.t-dev { width: 80px; }
.t-pdf { width: 88px; padding-right: 2px; }
.t-pan { width: 79px; padding-right: 4px; }
.t-ana { width: 51px; }
.t-des { width: 53px; }
.tell {
  margin-left: 15px;
  display: flex;
  align-items: center;
  gap: 6px;
  color: #a9cdb8;
}
.login {
  margin-left: auto;
  line-height: 25px;
  padding-right: 10px;
}
.share {
  width: 63px;
  background: #1d5f3a;
  display: flex;
  align-items: center;
  gap: 5px;
  padding-left: 8px;
  margin-bottom: 1px;
}

/* ribbon */
.ribbon {
  height: 94px;
  background: #f1f1f1;
  border-bottom: 1px solid #c6c6c6;
  padding-top: 4px;
  display: flex;
  position: relative;
}
.group {
  display: flex;
  flex-direction: column;
  height: 88px;
  border-right: 1px solid #d8d8d8;
  flex: none;
}
.g-clip { width: 117px; }
.g-font { width: 250px; }
.g-align { width: 239px; }
.g-num { width: 140px; }
.g-style { width: 464px; }
.g-cells { width: 134px; }
.g-edit { width: 229px; }
.g-inv { width: 55px; }
.g-save { width: 62px; }
.g-body {
  flex: 1;
  min-height: 0;
}
.g-body.row {
  display: flex;
}
.g-label {
  height: 16px;
  line-height: 16px;
  text-align: center;
  color: #666;
  position: relative;
  margin-bottom: 1px;
}
.lab-clip { padding-right: 16px; }
.launch {
  position: absolute;
  right: 5px;
  top: 6px;
  width: 7px;
  height: 7px;
  border-left: 1px solid #999;
  border-top: 1px solid #999;
  background: linear-gradient(135deg, transparent 55%, #888 55%);
}
.collapse {
  position: absolute;
  right: 3px;
  top: 83px;
}

/* ribbon rows, widths are the slots of the icons */
.rrow {
  display: flex;
  align-items: center;
  height: 23px;
  padding-left: 3px;
  margin-top: 6px;
}
.rrow + .rrow {
  margin-top: 8px;
}
.g-font .rrow:first-child,
.g-num .rrow {
  padding-left: 4px;
}
.ic {
  display: flex;
  align-items: center;
  justify-content: center;
  height: 23px;
  flex: none;
  position: relative;
}
.ic.on {
  background: #c6c6c6;
}
.w6 { width: 6px; }
.w8 { width: 8px; }
.w10 { width: 10px; }
.w12 { width: 12px; }
.w14 { width: 14px; }
.w16 { width: 16px; }
.w17 { width: 17px; }
.w18 { width: 18px; }
.w20 { width: 20px; }
.w21 { width: 21px; }
.w22 { width: 22px; }
.w23 { width: 23px; }
.w24 { width: 24px; }
.w26 { width: 26px; }
.w28 { width: 28px; }
.w30 { width: 30px; }
.w36 { width: 36px; }
.w48 { width: 48px; }
.w54 { width: 54px; }
.w60 { width: 60px; }
.w62 { width: 62px; }
.w95 { width: 95px; }
.ml6 { margin-left: 6px; }
.sep {
  display: block;
  width: 1px;
  height: 22px;
  background: #d4d4d4;
}
.t {
  font-weight: 400;
  margin-left: 4px;
  white-space: nowrap;
}
.select {
  height: 23px;
  background: #fff;
  border: 1px solid #c6c6c6;
  display: flex;
  align-items: center;
  justify-content: space-between;
  padding: 0 6px 0 2px;
  flex: none;
}
.s-font { width: 157px; }
.s-size { width: 40px; border-left: 0; padding-left: 3px; font-family: "Liberation Sans", sans-serif; font-size: 13px; }
.s-num { width: 131px; }
.letter {
  font-family: "Liberation Sans", sans-serif;
  font-size: 15px;
  color: #555;
}
.letter.small {
  font-size: 12px;
}
.letter sup {
  font-size: 8px;
  line-height: 1;
  color: #777;
  align-self: flex-start;
  margin-top: 3px;
}
.letter sup.blue {
  color: #3b6ea5;
}
.fb, .fi, .fu {
  font-family: "Liberation Serif", serif;
  font-size: 14px;
  color: #555;
}
.fb { font-weight: 700; }
.fi { font-style: italic; }
.fu { text-decoration: underline; font-weight: 700; font-family: "Liberation Sans", sans-serif; font-size: 13px; }
.fcolor {
  font-family: "Liberation Sans", sans-serif;
  font-size: 14px;
  color: #555;
  line-height: 14px;
  padding-bottom: 5px;
}
.fcolor::after {
  content: "";
  position: absolute;
  left: 5px;
  right: 5px;
  bottom: 2px;
  height: 4px;
  background: #e00000;
}
.wen {
  flex-direction: column;
  line-height: 1;
}
.wen small {
  font-family: "Liberation Sans", sans-serif;
  font-size: 8px;
  color: #555;
}
.wen em {
  font-size: 9px;
  color: #3b6ea5;
  font-weight: 700;
}
.orient {
  font-family: "Liberation Sans", sans-serif;
  font-size: 9px;
  font-weight: 700;
  fill: #666;
}
.pct {
  font-family: "Liberation Sans", sans-serif;
  font-size: 14px;
}
.comma {
  font-family: "Liberation Serif", serif;
  font-size: 15px;
  font-weight: 700;
  padding-bottom: 6px;
}
.dec {
  flex-direction: column;
  line-height: 1;
}
.dec small {
  font-family: "Liberation Sans", sans-serif;
  font-size: 8px;
}
.dec u {
  color: #3b78b5;
  text-decoration: none;
}

/* big buttons */
.big {
  display: flex;
  flex-direction: column;
  align-items: center;
  padding-top: 2px;
  line-height: 15px;
  flex: none;
}
.big.paste {
  padding-left: 2px;
}
.big-ic {
  margin-bottom: 3px;
}
.big span {
  white-space: nowrap;
}
.big .caret {
  margin-top: 6px;
}
.big .caret.inline {
  margin: 0 0 2px 3px;
}

/* small label+icon buttons */
.stack {
  display: flex;
  flex-direction: column;
  padding-top: 0;
  gap: 3px;
}
.sm {
  display: flex;
  align-items: center;
  height: 20px;
}
.sm b {
  font-weight: 400;
  margin-left: 2px;
  white-space: nowrap;
}
.g-edit .sm b {
  margin-left: 0;
}
.sm-c {
  height: 20px;
}

/* style gallery */
.gallery {
  margin: 2px 0 0 6px;
  width: 334px;
  height: 61px;
  background: #fff;
  border: 1px solid #c6c6c6;
  display: flex;
}
.cells {
  flex: 1;
  display: grid;
  grid-template-columns: 100px 100px 100px;
  grid-auto-rows: 22px;
  gap: 6px;
  padding: 5px 3px;
}
.st {
  font-size: 15px;
  line-height: 20px;
  padding-left: 5px;
  color: #333;
  white-space: nowrap;
}
.st-bad4 { background: #ff99cc; color: #a0008a; }
.st-good4 { background: #ccffcc; color: #3c9a3c; }
.st-normal {
  border: 2px solid #bfbfbf;
  line-height: 17px;
  padding-left: 4px;
}
.st-bad { background: #ffc7ce; color: #9c0006; }
.st-good { background: #c6efce; color: #006100; }
.g-scroll {
  width: 14px;
  border-left: 1px solid #c6c6c6;
  display: flex;
  flex-direction: column;
}
.g-scroll span {
  flex: 1;
  display: flex;
  align-items: center;
  justify-content: center;
  border-bottom: 1px solid #c6c6c6;
}
.g-scroll span:last-child {
  border-bottom: 0;
}
.g-scroll .dis {
  background: #e4e4e4;
}
.g-scroll .caret.bar {
  box-shadow: 0 -3px 0 -1px #777;
}
.sort-a, .sort-z {
  font-family: "Liberation Sans", sans-serif;
  font-weight: 700;
  font-size: 15px;
}
.sort-a { fill: #4f81bd; }
.sort-z { fill: #7a52b3; }

/* quick access */
.qat {
  height: 46px;
  background: #e6e6e6;
  display: flex;
  align-items: flex-start;
  padding-top: 10px;
}
.q-save { margin-left: 17px; }
.q-redo { margin-left: 34px; }
.q-c { margin: 7px 0 0 7px; }
.q-undo { margin-left: 22px; }
.q-print { margin-left: 23px; }
.q-find { margin-left: 38px; }

/* formula bar */
.formula {
  height: 28px;
  margin-bottom: 10px;
  display: flex;
  flex: none;
}
.namebox {
  margin-left: 6px;
  width: 122px;
  background: #fff;
  border: 1px solid #d0d0d0;
  display: flex;
  align-items: center;
  justify-content: space-between;
  padding: 0 6px 1px;
  font-size: 13px;
}
.dots {
  width: 31px;
  background: radial-gradient(circle, #aaa 1px, transparent 1.500px) center top / 100% 5px repeat-y;
  margin: 7px 0;
}
.fx {
  width: 109px;
  background: #fff;
  border: 1px solid #d0d0d0;
  display: flex;
  align-items: center;
  padding: 0 10px 0 13px;
  justify-content: space-between;
}
.fx em {
  font-family: "Liberation Serif", serif;
  font-style: italic;
  font-weight: 700;
  font-size: 13px;
  color: #555;
}
.finput {
  flex: 1;
  margin-left: 5px;
  background: #fff;
  border-top: 1px solid #d0d0d0;
  border-bottom: 1px solid #d0d0d0;
  border-left: 1px solid #d0d0d0;
  display: flex;
  align-items: center;
  justify-content: space-between;
  padding: 0 3px 1px 10px;
  font-size: 13px;
}

/* worksheet */
.main {
  flex: 1;
  min-height: 0;
  display: flex;
}
.sheet {
  width: 1526px;
  flex: none;
  display: flex;
  flex-direction: column;
}
.sheet-top {
  height: 751px;
  display: flex;
  flex: none;
}
.gridwrap {
  position: relative;
  width: 1508px;
  height: 751px;
  overflow: hidden;
  flex: none;
}
.grid {
  border-collapse: separate;
  border-spacing: 0;
  table-layout: fixed;
  width: 1508px;
  background: #fff;
}
.c0 { width: 24px; }
.ca { width: 102px; }
.cb { width: 69px; }
.cc { width: 70px; }
.cd { width: 89px; }
.ce { width: 78px; }
.cf { width: 97px; }
.cg { width: 126px; }
.ch { width: 84px; }
.ci { width: 84px; }
.cj { width: 84px; }
.ck { width: 85px; }
.cl { width: 113px; }
.cm { width: 131px; }
.cn { width: 126px; }
.co { width: 118px; }
.cp { width: 28px; }
.grid tr {
  height: 24px;
}
.grid tr.h30 {
  height: 30px;
}
.grid tr.head {
  height: 16px;
}
.grid th, .grid td {
  padding: 0;
  overflow: hidden;
  white-space: nowrap;
  text-align: center;
  line-height: 1;
}
.grid td {
  border-right: 1px solid #d4d4d4;
  border-bottom: 1px solid #d4d4d4;
  color: #222;
  position: relative;
}
.grid th {
  font-family: "Liberation Sans", sans-serif;
  font-weight: 400;
  font-size: 11px;
  color: #444;
  background: #e6e6e6;
  border-right: 1px solid #b5b5b5;
  border-bottom: 1px solid #c6c6c6;
  vertical-align: bottom;
  padding-bottom: 1px;
}
.grid .head th {
  border-right: 1px solid #c6c6c6;
  border-bottom: 1px solid #9b9b9b;
  vertical-align: middle;
  padding: 0;
}
.grid .head th.sel {
  background: #d0d0d0;
  border-bottom: 2px solid #217346;
}
.grid th.rsel {
  background: #d0d0d0;
  border-right: 2px solid #217346;
}
.grid .head th.corner {
  background: #e6e6e6 linear-gradient(135deg, transparent 50%, #b5b5b5 50%) 14px 5px / 8px 8px no-repeat;
}

/* plain data, big font */
.grid td.bigt {
  font-family: "Liberation Serif", "Noto Sans CJK SC", serif;
  font-size: 18px;
  font-weight: 300;
  color: #333;
}

/* first pivot */
.grid td.ph {
  background: #4472c4;
  color: #fff;
  font-weight: 700;
  font-size: 13px;
  border-right: 0;
  border-bottom: 0;
  box-shadow: 0 -2px 0 #4472c4;
}
.fbtn {
  position: absolute;
  right: 0;
  bottom: 1px;
  width: 17px;
  height: 17px;
  background: #ececec;
  border: 1px solid #bbb;
}
.fbtn::after {
  content: "";
  position: absolute;
  left: 4px;
  top: 5px;
  border-left: 4px solid transparent;
  border-right: 4px solid transparent;
  border-top: 4px solid #555;
}
.grid td.lbl {
  background: #d9e1f2;
  border-right: 0;
  border-bottom: 0;
  font-weight: 700;
  font-size: 13px;
  font-family: "Liberation Serif", "Noto Sans CJK SC", serif;
  text-align: left;
  padding-left: 23px;
  color: #222;
}
.pm {
  display: inline-block;
  width: 7px;
  height: 7px;
  border: 1px solid #aaa;
  background: linear-gradient(#666, #666) center / 3px 1px no-repeat;
  vertical-align: 1px;
}
.grid td.pv {
  font-family: "Liberation Serif", "Noto Sans CJK SC", serif;
  font-size: 13px;
  border-right: 0;
  border-bottom: 0;
  color: #333;
}
.grid td.nb {
  border-bottom: 0;
}
.grid td.sum {
  background: #8497b0;
  border-right: 0;
  border-bottom: 1px solid #d4d4d4;
  box-shadow: inset 0 2px 0 #fff, inset 0 -1px 0 #fff;
  font-weight: 700;
  font-size: 13px;
  font-family: "Liberation Serif", "Noto Sans CJK SC", serif;
  color: #10182b;
}
.grid td.mono {
  font-family: "Liberation Mono", monospace;
  padding-top: 2px;
}
.grid td.cur {
  background: #b4c6e4;
  box-shadow: inset 0 0 0 1.500px #217346, inset 0 0 0 2px #fff;
}

/* second pivot */
.grid td.pb2 {
  background: #dce8f5;
  border-right: 0;
  border-bottom: 0;
  font-weight: 700;
  font-size: 13px;
  color: #111;
}
.grid td.left {
  text-align: left;
  padding-left: 8px;
  font-size: 12.500px;
}
.grid td.mono12 {
  font-family: "Liberation Mono", monospace;
  font-size: 12px;
  padding-top: 2px;
}
.grid td.pv12 {
  font-family: "Liberation Serif", "Noto Sans CJK SC", serif;
  font-size: 12px;
  border-right: 0;
  border-bottom: 0;
  color: #333;
}
.grid td.line {
  border-bottom: 1px solid #95b3d7;
}
.fbtn.lt {
  right: auto;
  width: 16px;
  height: 16px;
  bottom: 3px;
  background: #f4f4f4;
}
.pb2:nth-child(3) .fbtn.lt {
  left: 53px;
}
.pb2:nth-child(2) .fbtn.lt {
  left: 84px;
}

/* slicers */
.slicer {
  position: absolute;
  background: #fff;
  padding: 0 6px;
  display: flex;
  flex-direction: column;
}
.sl-class {
  left: 697px;
  top: 45px;
  width: 163px;
  height: 156px;
  border: 1px solid #e39a52;
  --sl-line: #e0853f;
  --sl-fill: #f8cbad;
}
.sl-subj {
  left: 915px;
  top: 39px;
  width: 159px;
  height: 155px;
  border: 1px solid #6f9cc4;
  --sl-line: #5b87ad;
  --sl-fill: #b8d2ed;
}
.sl-head {
  display: flex;
  align-items: center;
  height: 19px;
  border-bottom: 1px solid var(--sl-line);
  margin-bottom: 3px;
  color: #111;
  font-size: 12px;
}
.sl-head span {
  flex: 1;
}
.sl-head svg + svg {
  margin-left: 8px;
}
.sl-item {
  height: 17.500px;
  margin-bottom: 2.500px;
  background: var(--sl-fill);
  border: 1px solid #9a9a9a;
  border-radius: 4px;
  line-height: 15px;
  padding-left: 6px;
  color: #333;
  font-size: 12.500px;
}

/* chart */
.chart {
  position: absolute;
  left: 675px;
  top: 216px;
  width: 447px;
  height: 244px;
  background: #fff;
  outline: 1px solid #d9d9d9;
  outline-offset: -1px;
}
.ch-title {
  font-size: 14.500px;
  fill: #595959;
  letter-spacing: .3px;
}
.ch-y text, .ch-x text {
  font-family: "Liberation Sans", "Noto Sans CJK SC", sans-serif;
  font-size: 9.500px;
  fill: #595959;
}
.ch-btn {
  font-size: 9.500px;
  fill: #555;
}
.ch-leg text {
  font-size: 10px;
  fill: #777;
}

/* tooltip and cursor */
.tip {
  position: absolute;
  left: 454px;
  top: 171px;
  width: 50px;
  height: 20px;
  background: #fff;
  border: 1px solid #c8c8c8;
  text-align: center;
  line-height: 18px;
  color: #777;
  white-space: nowrap;
  box-shadow: 1px 1px 1px #ddd;
}
.cursor {
  position: absolute;
  left: 454px;
  top: 156px;
}

/* vertical scrollbar */
.vscroll {
  flex: 1;
  padding: 2px 3px 0 0;
  display: flex;
  flex-direction: column;
}
.sb-btn {
  width: 15px;
  height: 15px;
  background: #fff;
  border: 1px solid #c6c6c6;
  display: flex;
  align-items: center;
  justify-content: center;
  flex: none;
}
.sb-track {
  flex: 1;
  width: 15px;
  background: #d6d6d6;
  padding-top: 245px;
}
.sb-thumb {
  height: 218px;
  background: #fff;
  border: 1px solid #a6a6a6;
}

/* sheet tabs */
.tabbar {
  height: 28px;
  border-top: 1px solid #9b9b9b;
  display: flex;
  align-items: flex-start;
  background: #e6e6e6;
}
.nav {
  width: 100px;
  height: 27px;
  display: flex;
  align-items: center;
  gap: 23px;
  padding-left: 27px;
  flex: none;
}
.stab {
  height: 21px;
  margin-top: 2px;
  text-align: center;
  line-height: 21px;
  font-size: 13px;
  color: #555;
  border-right: 1px solid #aaa;
  padding-right: 2px;
  flex: none;
  white-space: nowrap;
}
.s-active {
  width: 64px;
  height: 26px;
  margin-top: -1px;
  padding: 0;
  background: #fff;
  color: #217346;
  border-left: 1px solid #9b9b9b;
  border-right: 1px solid #9b9b9b;
  border-bottom: 3px solid #217346;
  line-height: 24px;
}
.s2 { width: 75px; }
.s3 { width: 64px; }
.s4 { width: 116px; }
.s5 { width: 63px; }
.s6 { width: 68px; }
.blue-tab, .org-tab {
  display: block;
  height: 21px;
  color: #222;
  margin-left: 2px;
}
.blue-tab { background: #b4d0ea; }
.org-tab { background: #f4b183; }
.addtab {
  margin: 5px 0 0 32px;
}
.tdots {
  width: 3px;
  height: 12px;
  margin: 7px 0 0 auto;
  background: radial-gradient(circle, #999 1px, transparent 1.400px) 0 0 / 3px 4px repeat-y;
}
.hscroll {
  width: 573px;
  height: 15px;
  margin: 6px 19px 0 15px;
  display: flex;
  background: #d6d6d6;
}
.hb {
  width: 15px;
  background: #fff;
  border: 1px solid #c6c6c6;
  display: flex;
  align-items: center;
  justify-content: center;
  flex: none;
}
.hthumb {
  width: 353px;
  background: #fff;
  border: 1px solid #a6a6a6;
}
.htrack {
  flex: 1;
}

/* side panel */
.panel {
  flex: 1;
  background: #e6e6e6;
  border-left: 1px solid #c6c6c6;
  padding: 12px 8px 0 12px;
  display: flex;
  flex-direction: column;
  min-width: 0;
}
.p-title {
  height: 30px;
  display: flex;
  align-items: center;
  margin: -2px -2px 0 0;
  color: #217346;
  font-size: 21px;
}
.p-title span {
  flex: 1;
}
.p-caret {
  border-left-width: 4px;
  border-right-width: 4px;
  border-top-width: 4px;
  margin-right: 9px;
}
.p-sub {
  margin-top: 6px;
  height: 26px;
  display: flex;
  align-items: center;
  justify-content: space-between;
}
.gear {
  width: 42px;
  height: 26px;
  background: #f1f1f1;
  border: 1px solid #b0b0b0;
  display: flex;
  align-items: center;
  justify-content: center;
  gap: 8px;
}
.p-search {
  margin-top: 16px;
  height: 20px;
  background: #fff;
  border: 1px solid #a6a6a6;
  display: flex;
  align-items: center;
  justify-content: space-between;
  padding: 0 3px 0 2px;
  color: #666;
}
.p-list {
  margin-top: 20px;
  height: 261px;
  background: #fff;
  padding: 0 2px;
}
.fld {
  height: 20px;
  display: flex;
  align-items: center;
  font-weight: 500;
  color: #333;
}
.f1 {
  margin-top: -2px;
}
.chk {
  width: 12px;
  height: 12px;
  margin-right: 7px;
  border: 1px solid #aaa;
  background: #fff;
  position: relative;
  flex: none;
}
.chk::after {
  content: "";
  position: absolute;
  left: 3px;
  top: 0;
  width: 4px;
  height: 8px;
  border: solid #888;
  border-width: 0 1.500px 1.500px 0;
  transform: rotate(40deg);
}
.chk.empty::after {
  display: none;
}
.f3 {
  margin: 2px 0 10px;
}
.more {
  padding-left: 1px;
  color: #555;
}
.p-dots {
  margin-top: 16px;
  height: 1px;
  background: repeating-linear-gradient(90deg, #bbb 0 1px, transparent 1px 2px);
}
.p-drag {
  height: 26px;
  line-height: 24px;
  padding-left: 3px;
}
.areas {
  margin-top: 13px;
  margin-left: 3px;
  display: grid;
  grid-template-columns: 116px 116px;
}
.area {
  display: flex;
  flex-direction: column;
}
.a-left {
  border-right: 1px solid #c0c0c0;
  padding-right: 6px;
  width: 116px;
}
.a-right {
  padding-left: 2px;
}
.a-head {
  height: 23px;
  display: flex;
  align-items: flex-start;
  gap: 10px;
  padding-left: 4px;
  color: #555;
}
.a-head svg {
  margin-top: 2px;
}
.a-right .a-head {
  padding-left: 5px;
  gap: 9px;
}
.a-box {
  height: 109px;
  background: #fff;
  padding: 2px 1px;
}
.a-low {
  margin-top: 7px;
  border-top: 1px solid #c0c0c0;
  padding-top: 6px;
}
.a-low .a-head {
  height: 22px;
}
.pill {
  height: 23px;
  margin-bottom: 2px;
  background: #fff;
  border: 1px solid #bbb;
  display: flex;
  align-items: center;
  justify-content: space-between;
  padding: 0 8px 0 6px;
  color: #444;
  white-space: nowrap;
}
.p-foot {
  margin-top: 21px;
  display: flex;
  align-items: flex-start;
  padding-left: 3px;
  color: #444;
}
.p-foot .chk {
  width: 13px;
  height: 13px;
  margin: 6px 6px 0 0;
}
.p-foot span {
  margin-top: 4px;
}
.p-update {
  margin-left: auto;
  width: 35px;
  height: 29px;
  background: #f7f7f7;
}

/* status bar */
.status {
  height: 20px;
  background: #f1f1f1;
  border-top: 1px solid #c6c6c6;
  display: flex;
  align-items: center;
  color: #666;
  flex: none;
}
.st-ready { margin-left: 6px; }
.st-mode { margin-left: 19px; }
.st-cal { margin-left: 19px; }
.st-stats {
  margin-left: auto;
  margin-right: 32px;
  display: flex;
  gap: 22px;
  font-family: "Liberation Serif", "Noto Sans CJK SC", serif;
}
.viewbtn {
  width: 26px;
  height: 19px;
  display: flex;
  align-items: center;
  justify-content: center;
  flex: none;
}
.viewbtn.on {
  background: #c6c6c6;
}
.vb1 { margin-right: 7px; }
.vb2 { margin-right: 11px; }
.vb3 { margin-right: 8px; }
.zoomer {
  display: flex;
  align-items: center;
  width: 127px;
  flex: none;
  font-family: "Liberation Sans", sans-serif;
  font-size: 15px;
}
.zoomer b {
  width: 12px;
  text-align: center;
  color: #555;
}
.z-line {
  flex: 1;
  height: 1px;
  background: #aaa;
  position: relative;
}
.z-line i {
  position: absolute;
  left: 40px;
  top: -6px;
  width: 4px;
  height: 12px;
  background: #555;
}
.z-val {
  margin: 0 15px 0 14px;
  flex: none;
  font-family: "Liberation Sans", sans-serif;
  font-size: 12px;
}

/* IME pill and the download site stamp */
.ime {
  position: absolute;
  left: 1339px;
  top: 991px;
  width: 60px;
  height: 26px;
  background: #fff;
  border-radius: 7px;
  box-shadow: 0 0 2px #999;
  text-align: center;
  line-height: 26px;
  color: #444;
  font-family: "Liberation Sans", "Noto Sans CJK SC", sans-serif;
  font-size: 12px;
}
.ime span {
  font-family: "DejaVu Sans", sans-serif;
}
.wmark {
  position: absolute;
  left: 1618px;
  top: 985px;
  display: flex;
  align-items: flex-start;
  white-space: nowrap;
  opacity: .85;
}
.wm-cn {
  font-size: 21.500px;
  font-weight: 700;
  line-height: 26px;
  color: #5c93c9;
}
.wm-url {
  font-family: "Liberation Sans", sans-serif;
  font-size: 17.500px;
  line-height: 21px;
  color: #58a84a;
}
```
